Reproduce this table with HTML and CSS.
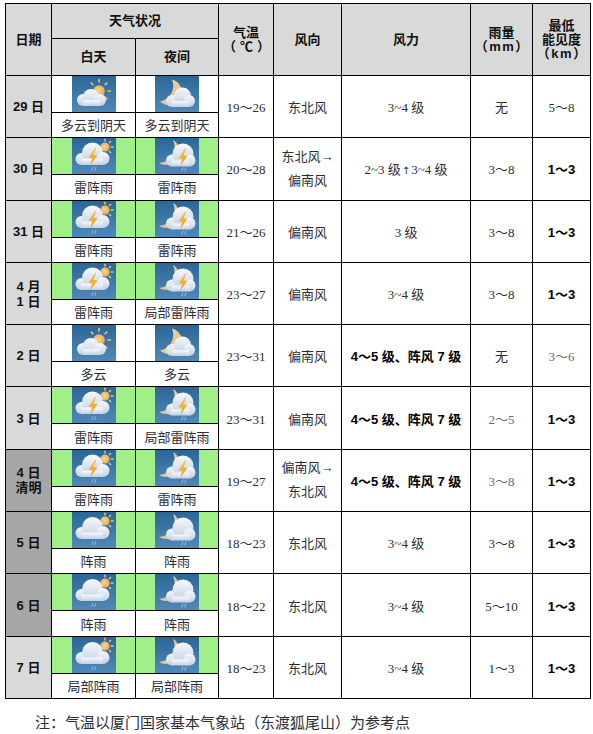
FILE: index.html
```html
<!DOCTYPE html>
<html lang="zh-CN">
<head>
<meta charset="utf-8">
<title>天气预报</title>
<link rel="stylesheet" href="styles.css">
</head>
<body>
<svg class="defs" width="0" height="0" aria-hidden="true">
  <defs>
    <linearGradient id="gBg" x1="0" y1="0" x2="0" y2="1">
      <stop offset="0" stop-color="#2a6797"/>
      <stop offset="1" stop-color="#5089b7"/>
    </linearGradient>
    <linearGradient id="gCloud" x1="0" y1="0" x2="0" y2="1">
      <stop offset="0" stop-color="#f7f9fc"/>
      <stop offset="1" stop-color="#c2d0e2"/>
    </linearGradient>
    <radialGradient id="gSun" cx="0.45" cy="0.45" r="0.6">
      <stop offset="0" stop-color="#fad58a"/>
      <stop offset="1" stop-color="#eea64c"/>
    </radialGradient>
    <linearGradient id="gMoon" x1="0" y1="0" x2="1" y2="1">
      <stop offset="0" stop-color="#f5e2b8"/>
      <stop offset="1" stop-color="#e3b06f"/>
    </linearGradient>
    <linearGradient id="gBolt" x1="0" y1="0" x2="0" y2="1">
      <stop offset="0" stop-color="#f8c24e"/>
      <stop offset="1" stop-color="#ec9a22"/>
    </linearGradient>

    <symbol id="d-cloudy" viewBox="0 0 44 36">
      <rect width="44" height="36" fill="url(#gBg)"/>
      <g stroke="#f6c46a" stroke-width="1.6" stroke-linecap="round">
        <line x1="27" y1="3.5" x2="27" y2="6"/>
        <line x1="19.2" y1="7" x2="20.8" y2="8.6"/>
        <line x1="34.8" y1="7" x2="33.2" y2="8.6"/>
        <line x1="38.5" y1="15" x2="36" y2="15"/>
        <line x1="35" y1="23" x2="33.4" y2="21.4"/>
      </g>
      <circle cx="27" cy="15" r="5.8" fill="url(#gSun)"/>
      <g fill="url(#gCloud)">
        <circle cx="11" cy="24" r="6"/>
        <circle cx="19" cy="21" r="8"/>
        <circle cx="28" cy="24" r="6"/>
        <rect x="11" y="24" width="17" height="6"/>
      </g>
    </symbol>

    <symbol id="n-cloudy" viewBox="0 0 44 36">
      <rect width="44" height="36" fill="url(#gBg)"/>
      <path d="M17 3.5 A13 13 0 1 1 5 25.5 A16 16 0 0 0 17 3.5 Z" fill="url(#gMoon)"/>
      <g fill="url(#gCloud)">
        <circle cx="17" cy="25" r="6"/>
        <circle cx="27.5" cy="20" r="8.5"/>
        <circle cx="34" cy="25" r="6"/>
        <rect x="17" y="25" width="17" height="6"/>
      </g>
    </symbol>

    <symbol id="d-thunder" viewBox="0 0 44 36">
      <rect width="44" height="36" fill="url(#gBg)"/>
      <g stroke="#f6c46a" stroke-width="1.4" stroke-linecap="round">
        <line x1="33" y1="1.2" x2="33" y2="3"/>
        <line x1="38.6" y1="3.4" x2="37.4" y2="4.6"/>
        <line x1="41" y1="9" x2="39.2" y2="9"/>
        <line x1="38.6" y1="14.6" x2="37.4" y2="13.4"/>
      </g>
      <circle cx="33" cy="9" r="4.6" fill="url(#gSun)"/>
      <g fill="url(#gCloud)">
        <circle cx="9.5" cy="21" r="6"/>
        <circle cx="20.5" cy="15" r="10.5"/>
        <circle cx="31" cy="20.5" r="6.5"/>
        <rect x="9.5" y="20.5" width="21.5" height="6.5"/>
      </g>
      <path d="M23 10 L16.5 20 L20.3 20 L18.3 27.5 L25.5 17 L21.6 17 L24.2 10 Z" fill="url(#gBolt)"/>
      <g stroke="#b7c7db" stroke-width="0.8" stroke-linecap="round">
        <line x1="20.8" y1="29.5" x2="19.8" y2="32.5"/>
        <line x1="23.8" y1="29.5" x2="22.8" y2="32.5"/>
      </g>
    </symbol>

    <symbol id="n-thunder" viewBox="0 0 44 36">
      <rect width="44" height="36" fill="url(#gBg)"/>
      <path d="M18 2 A13 13 0 1 1 4 25 A16 16 0 0 0 18 2 Z" fill="url(#gMoon)"/>
      <g fill="url(#gCloud)">
        <circle cx="17" cy="22.5" r="6"/>
        <circle cx="28" cy="16" r="10.5"/>
        <circle cx="34.5" cy="22.5" r="6"/>
        <rect x="17" y="22.5" width="17.5" height="6"/>
      </g>
      <path d="M30 10.5 L23.5 20.5 L27.3 20.5 L25.3 28 L32.5 17.5 L28.6 17.5 L31.2 10.5 Z" fill="url(#gBolt)"/>
      <g stroke="#b7c7db" stroke-width="0.8" stroke-linecap="round">
        <line x1="27.8" y1="30" x2="26.8" y2="33"/>
        <line x1="30.8" y1="30" x2="29.8" y2="33"/>
      </g>
    </symbol>

    <symbol id="d-shower" viewBox="0 0 44 36">
      <rect width="44" height="36" fill="url(#gBg)"/>
      <g stroke="#f6c46a" stroke-width="1.4" stroke-linecap="round">
        <line x1="33" y1="1.2" x2="33" y2="3"/>
        <line x1="38.6" y1="3.4" x2="37.4" y2="4.6"/>
        <line x1="41" y1="9" x2="39.2" y2="9"/>
        <line x1="38.6" y1="14.6" x2="37.4" y2="13.4"/>
      </g>
      <circle cx="33" cy="9" r="4.6" fill="url(#gSun)"/>
      <g fill="url(#gCloud)">
        <circle cx="9.5" cy="21" r="6"/>
        <circle cx="20.5" cy="15.5" r="10.5"/>
        <circle cx="31" cy="20.5" r="6.5"/>
        <rect x="9.5" y="20.5" width="21.5" height="6.5"/>
      </g>
      <g stroke="#b7c7db" stroke-width="0.8" stroke-linecap="round">
        <line x1="20.8" y1="29.5" x2="19.8" y2="32.5"/>
        <line x1="23.8" y1="29.5" x2="22.8" y2="32.5"/>
      </g>
    </symbol>

    <symbol id="n-shower" viewBox="0 0 44 36">
      <rect width="44" height="36" fill="url(#gBg)"/>
      <path d="M18 2 A13 13 0 1 1 4 25 A16 16 0 0 0 18 2 Z" fill="url(#gMoon)"/>
      <g fill="url(#gCloud)">
        <circle cx="17" cy="22.5" r="6"/>
        <circle cx="28" cy="16" r="10.5"/>
        <circle cx="34.5" cy="22.5" r="6"/>
        <rect x="17" y="22.5" width="17.5" height="6"/>
      </g>
      <g stroke="#b7c7db" stroke-width="0.8" stroke-linecap="round">
        <line x1="27.8" y1="30" x2="26.8" y2="33"/>
        <line x1="30.8" y1="30" x2="29.8" y2="33"/>
      </g>
    </symbol>
  </defs>
</svg>

<table class="fc">
  <colgroup>
    <col class="c-date"><col class="c-day"><col class="c-night"><col class="c-temp">
    <col class="c-dir"><col class="c-force"><col class="c-rain"><col class="c-vis">
  </colgroup>
  <thead>
    <tr class="h1">
      <th rowspan="2">日期</th>
      <th colspan="2">天气状况</th>
      <th rowspan="2">气温<br><span class="unit wide">（℃）</span></th>
      <th rowspan="2">风向</th>
      <th rowspan="2">风力</th>
      <th rowspan="2">雨量<br><span class="unit">（mm）</span></th>
      <th rowspan="2" class="vis-h">最低<br>能见度<br><span class="unit">（km）</span></th>
    </tr>
    <tr class="h2">
      <th>白天</th>
      <th>夜间</th>
    </tr>
  </thead>
  <tbody>
    <!-- 29 -->
    <tr class="ir">
      <td rowspan="2" class="date">29 日</td>
      <td class="ic"><svg class="wi"><use href="#d-cloudy"/></svg></td>
      <td class="ic"><svg class="wi"><use href="#n-cloudy"/></svg></td>
      <td rowspan="2">19～26</td>
      <td rowspan="2">东北风</td>
      <td rowspan="2">3~4 级</td>
      <td rowspan="2">无</td>
      <td rowspan="2">5～8</td>
    </tr>
    <tr class="tr"><td class="wt">多云到阴天</td><td class="wt">多云到阴天</td></tr>
    <!-- 30 -->
    <tr class="ir">
      <td rowspan="2" class="date">30 日</td>
      <td class="ic g"><svg class="wi"><use href="#d-thunder"/></svg></td>
      <td class="ic g"><svg class="wi"><use href="#n-thunder"/></svg></td>
      <td rowspan="2">20～28</td>
      <td rowspan="2" class="two">东北风→<br>偏南风</td>
      <td rowspan="2">2~3 级<span class="up">↑</span>3~4 级</td>
      <td rowspan="2">3～8</td>
      <td rowspan="2" class="b">1～3</td>
    </tr>
    <tr class="tr"><td class="wt">雷阵雨</td><td class="wt">雷阵雨</td></tr>
    <!-- 31 -->
    <tr class="ir">
      <td rowspan="2" class="date">31 日</td>
      <td class="ic g"><svg class="wi"><use href="#d-thunder"/></svg></td>
      <td class="ic g"><svg class="wi"><use href="#n-thunder"/></svg></td>
      <td rowspan="2">21～26</td>
      <td rowspan="2">偏南风</td>
      <td rowspan="2">3 级</td>
      <td rowspan="2">3～8</td>
      <td rowspan="2" class="b">1～3</td>
    </tr>
    <tr class="tr"><td class="wt">雷阵雨</td><td class="wt">雷阵雨</td></tr>
    <!-- 4/1 -->
    <tr class="ir">
      <td rowspan="2" class="date">4 月<br>1 日</td>
      <td class="ic g"><svg class="wi"><use href="#d-thunder"/></svg></td>
      <td class="ic g"><svg class="wi"><use href="#n-thunder"/></svg></td>
      <td rowspan="2">23～27</td>
      <td rowspan="2">偏南风</td>
      <td rowspan="2">3~4 级</td>
      <td rowspan="2">3～8</td>
      <td rowspan="2" class="b">1～3</td>
    </tr>
    <tr class="tr"><td class="wt">雷阵雨</td><td class="wt">局部雷阵雨</td></tr>
    <!-- 2 -->
    <tr class="ir">
      <td rowspan="2" class="date">2 日</td>
      <td class="ic"><svg class="wi"><use href="#d-cloudy"/></svg></td>
      <td class="ic"><svg class="wi"><use href="#n-cloudy"/></svg></td>
      <td rowspan="2">23～31</td>
      <td rowspan="2">偏南风</td>
      <td rowspan="2" class="bw">4～5 级、阵风 7 级</td>
      <td rowspan="2">无</td>
      <td rowspan="2" class="lt">3～6</td>
    </tr>
    <tr class="tr"><td class="wt">多云</td><td class="wt">多云</td></tr>
    <!-- 3 -->
    <tr class="ir">
      <td rowspan="2" class="date">3 日</td>
      <td class="ic g"><svg class="wi"><use href="#d-thunder"/></svg></td>
      <td class="ic g"><svg class="wi"><use href="#n-thunder"/></svg></td>
      <td rowspan="2">23～31</td>
      <td rowspan="2">偏南风</td>
      <td rowspan="2" class="bw">4～5 级、阵风 7 级</td>
      <td rowspan="2" class="lt">2～5</td>
      <td rowspan="2" class="b">1～3</td>
    </tr>
    <tr class="tr"><td class="wt">雷阵雨</td><td class="wt">局部雷阵雨</td></tr>
    <!-- 4 -->
    <tr class="ir">
      <td rowspan="2" class="date dk">4 日<br>清明</td>
      <td class="ic g"><svg class="wi"><use href="#d-thunder"/></svg></td>
      <td class="ic g"><svg class="wi"><use href="#n-thunder"/></svg></td>
      <td rowspan="2">19～27</td>
      <td rowspan="2" class="two">偏南风→<br>东北风</td>
      <td rowspan="2" class="bw">4～5 级、阵风 7 级</td>
      <td rowspan="2" class="lt">3～8</td>
      <td rowspan="2" class="b">1～3</td>
    </tr>
    <tr class="tr"><td class="wt">雷阵雨</td><td class="wt">雷阵雨</td></tr>
    <!-- 5 -->
    <tr class="ir">
      <td rowspan="2" class="date dk">5 日</td>
      <td class="ic g"><svg class="wi"><use href="#d-shower"/></svg></td>
      <td class="ic g"><svg class="wi"><use href="#n-shower"/></svg></td>
      <td rowspan="2">18～23</td>
      <td rowspan="2">东北风</td>
      <td rowspan="2">3~4 级</td>
      <td rowspan="2">3～8</td>
      <td rowspan="2" class="b">1～3</td>
    </tr>
    <tr class="tr"><td class="wt">阵雨</td><td class="wt">阵雨</td></tr>
    <!-- 6 -->
    <tr class="ir">
      <td rowspan="2" class="date dk">6 日</td>
      <td class="ic g"><svg class="wi"><use href="#d-shower"/></svg></td>
      <td class="ic g"><svg class="wi"><use href="#n-shower"/></svg></td>
      <td rowspan="2">18～22</td>
      <td rowspan="2">东北风</td>
      <td rowspan="2">3~4 级</td>
      <td rowspan="2">5～10</td>
      <td rowspan="2" class="b">1～3</td>
    </tr>
    <tr class="tr"><td class="wt">阵雨</td><td class="wt">阵雨</td></tr>
    <!-- 7 -->
    <tr class="ir">
      <td rowspan="2" class="date">7 日</td>
      <td class="ic g"><svg class="wi"><use href="#d-shower"/></svg></td>
      <td class="ic g"><svg class="wi"><use href="#n-shower"/></svg></td>
      <td rowspan="2">18～23</td>
      <td rowspan="2">东北风</td>
      <td rowspan="2">3~4 级</td>
      <td rowspan="2">1～3</td>
      <td rowspan="2" class="b">1～3</td>
    </tr>
    <tr class="tr"><td class="wt">局部阵雨</td><td class="wt">局部阵雨</td></tr>
  </tbody>
</table>

<p class="note">注：气温以厦门国家基本气象站（东渡狐尾山）为参考点</p>
</body>
</html>
```

FILE: styles.css
```css
html, body {
  background: #ffffff;
}

body {
  margin: 0;
  padding: 3px 0 0 5px;
  font-family: "Liberation Serif", "Noto Sans CJK SC", serif;
  font-size: 13px;
  color: #2e2e33;
}

.defs {
  position: absolute;
  width: 0;
  height: 0;
  overflow: hidden;
}

.fc {
  border-collapse: collapse;
  table-layout: fixed;
  width: 586px;
}

.c-date { width: 46px; }
.c-day { width: 84px; }
.c-night { width: 83px; }
.c-temp { width: 55px; }
.c-dir { width: 68px; }
.c-force { width: 129px; }
.c-rain { width: 62px; }
.c-vis { width: 58px; }

.fc th,
.fc td {
  border: 1px solid #000000;
  padding: 0;
  text-align: center;
  vertical-align: middle;
}

.fc th {
  background: #d9d9d9;
  font-family: "Liberation Sans", "Noto Sans CJK SC", sans-serif;
  font-weight: 700;
  font-size: 13px;
  line-height: 14px;
  color: #111111;
}

.unit {
  display: inline-block;
  white-space: nowrap;
  letter-spacing: 1.5px;
  padding-left: 1.5px;
}

.unit.wide {
  letter-spacing: 4px;
  padding-left: 4px;
}

.h1 { height: 35px; }
.h2 { height: 37px; }

.ir { height: 37px; }
.tr { height: 25.3px; }

.date {
  background: #d9d9d9;
  font-family: "Liberation Sans", "Noto Sans CJK SC", sans-serif;
  font-weight: 700;
  font-size: 13px;
  line-height: 15px;
  color: #111111;
}

.date.dk {
  background: #a6a6a6;
}

.ic {
  line-height: 0;
}

.ic.g {
  background: #a1ef89;
}

.wi {
  display: block;
  width: 44px;
  height: 36px;
  margin: 0 auto;
}

.wt {
  font-family: "Noto Sans CJK SC", sans-serif;
  font-size: 13px;
  line-height: 16px;
  color: #2e2e33;
}

.two {
  line-height: 24px;
}

.up {
  font-family: "DejaVu Sans", sans-serif;
  font-size: 10px;
  padding: 0 1px;
}

.b {
  font-family: "Liberation Sans", "Noto Sans CJK SC", sans-serif;
  font-weight: 700;
  font-size: 13px;
  color: #000000;
}

.bw {
  font-family: "Liberation Sans", "Noto Sans CJK SC", sans-serif;
  font-weight: 700;
  font-size: 13px;
  color: #000000;
}

.lt {
  color: #6e6a66;
}

.note {
  margin: 13px 0 0 30px;
  font-family: "Noto Sans CJK SC", sans-serif;
  font-size: 15px;
  line-height: 20px;
  color: #2e2e33;
}
```
